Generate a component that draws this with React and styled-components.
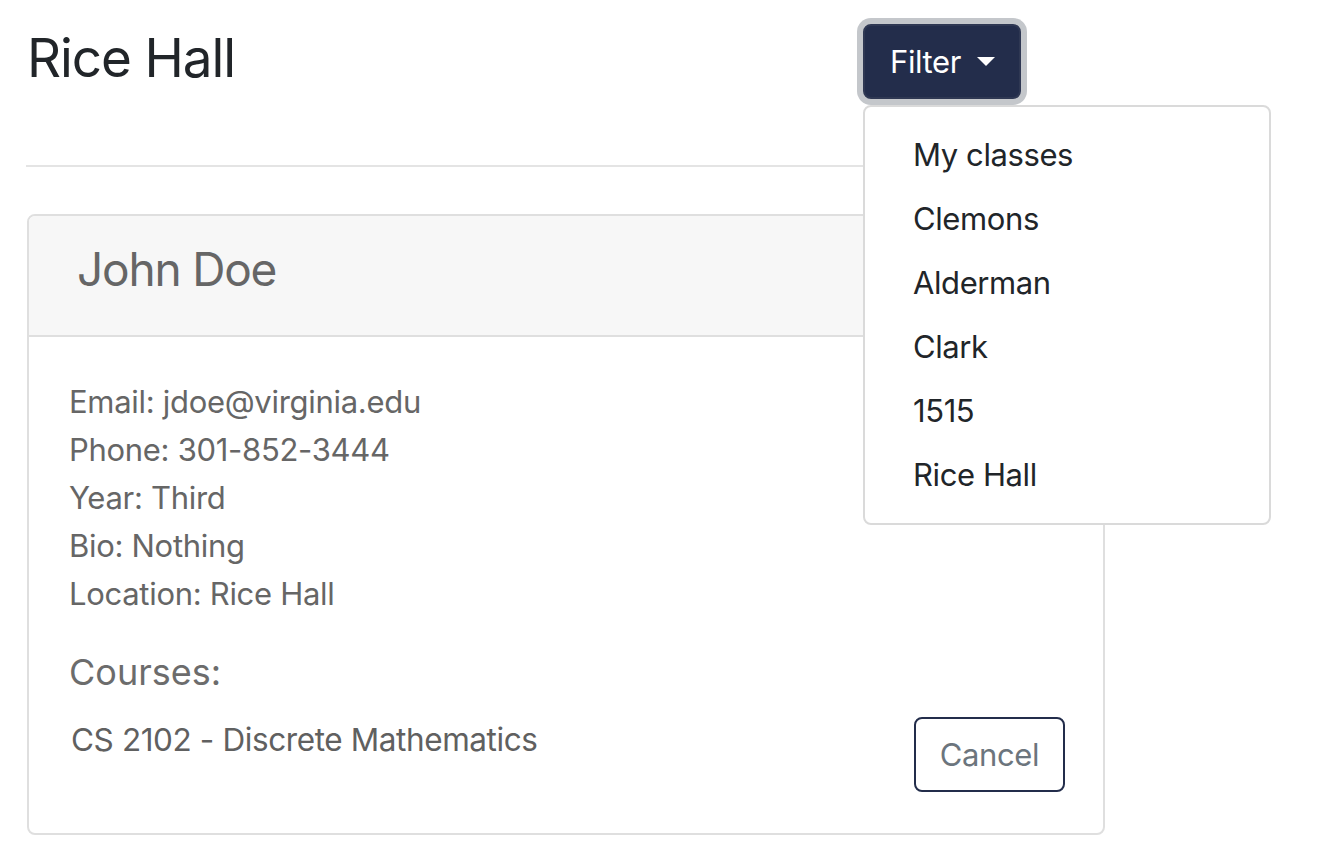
import React from "react";
import styled, { createGlobalStyle } from "styled-components";

const GlobalStyle = createGlobalStyle`
  html, body {
    margin: 0;
    padding: 0;
    background: #ffffff;
  }
  body {
    font-family: Inter, "Noto Sans", "Liberation Sans", sans-serif;
    color: #212529;
    -webkit-font-smoothing: antialiased;
  }
  * { box-sizing: border-box; }
`;

const Page = styled.div`
  width: 1334px;
  padding: 24px 0 0 27px;
`;

const TopBar = styled.div`
  display: flex;
  align-items: flex-start;
  height: 75px;
`;

const Title = styled.h3`
  flex: 0 0 836px;
  margin: 0;
  padding-top: 3px;
  font-size: 53px;
  line-height: 1.2;
  letter-spacing: -1.1px;
  font-weight: 400;
  color: #212529;
`;

const FilterWrap = styled.div`
  position: relative;
`;

const FilterButton = styled.button`
  display: inline-flex;
  align-items: center;
  height: 75px;
  padding: 0 24px 0 25px;
  border: 2px solid #2f3853;
  border-radius: 8px;
  background: #232d4b;
  color: #ffffff;
  font-family: inherit;
  font-size: 31px;
  letter-spacing: -0.4px;
  line-height: 48px;
  box-shadow: 0 0 0 6px #c4c7cb;
  cursor: pointer;
`;

const Caret = styled.span`
  display: inline-block;
  margin-left: 16px;
  width: 0;
  height: 0;
  border-top: 9px solid #ffffff;
  border-left: 9.5px solid transparent;
  border-right: 9.5px solid transparent;
`;

const Menu = styled.div`
  position: absolute;
  top: 81px;
  left: 0;
  width: 408px;
  padding: 16px 0 16px;
  background: #ffffff;
  border: 2px solid #dadada;
  border-radius: 8px;
  z-index: 10;
`;

const MenuItem = styled.div`
  padding: 8px 48px;
  font-size: 31px;
  letter-spacing: -0.4px;
  line-height: 48px;
  color: #212529;
  white-space: nowrap;
`;

const Divider = styled.hr`
  width: 1080px;
  height: 2px;
  margin: 66px 0 0 -1px;
  border: 0;
  background: #e4e4e4;
`;

const Card = styled.section`
  width: 1078px;
  margin-top: 47px;
  border: 2px solid #dfdfdf;
  border-radius: 8px;
  background: #ffffff;
`;

const CardHeader = styled.header`
  padding: 26px 48px 38px;
  background: #f7f7f7;
  border-bottom: 2px solid #dfdfdf;
  border-radius: 6px 6px 0 0;
`;

const Name = styled.h4`
  margin: 0;
  font-size: 46px;
  line-height: 1.2;
  letter-spacing: -1.2px;
  font-weight: 400;
  color: #666666;
`;

const CardBody = styled.div`
  padding: 41px 38px 41px 40px;
`;

const InfoLine = styled.div`
  font-size: 31px;
  letter-spacing: -0.3px;
  line-height: 48px;
  color: #666666;
`;

const SectionTitle = styled.h5`
  margin: 33px 0 22px;
  font-size: 36px;
  line-height: 1.2;
  letter-spacing: 0;
  font-weight: 400;
  color: #6c6c6c;
`;

const CourseRow = styled.div`
  display: flex;
  justify-content: space-between;
  align-items: flex-start;
`;

const CourseList = styled.ul`
  margin: 0;
  padding: 0 0 0 2px;
  list-style: none;
`;

const Course = styled.li`
  font-size: 31.5px;
  letter-spacing: -0.4px;
  line-height: 48px;
  color: #606060;
`;

const CancelButton = styled.button`
  margin-top: 1px;
  height: 75px;
  padding: 0 24px;
  border: 2px solid #232d4b;
  border-radius: 8px;
  background: #ffffff;
  color: #6c757d;
  font-family: inherit;
  font-size: 31px;
  letter-spacing: -0.4px;
  line-height: 48px;
  cursor: pointer;
`;

const menuItems = ["My classes", "Clemons", "Alderman", "Clark", "1515", "Rice Hall"];

const info = [
  ["Email", "jdoe@virginia.edu"],
  ["Phone", "301-852-3444"],
  ["Year", "Third"],
  ["Bio", "Nothing"],
  ["Location", "Rice Hall"],
];

export default function App() {
  return (
    <>
      <GlobalStyle />
      <Page>
        <TopBar>
          <Title>Rice Hall</Title>
          <FilterWrap>
            <FilterButton type="button">
              Filter
              <Caret />
            </FilterButton>
            <Menu>
              {menuItems.map((m) => (
                <MenuItem key={m}>{m}</MenuItem>
              ))}
            </Menu>
          </FilterWrap>
        </TopBar>
        <Divider />
        <Card>
          <CardHeader>
            <Name>John Doe</Name>
          </CardHeader>
          <CardBody>
            {info.map(([k, v]) => (
              <InfoLine key={k}>
                {k}: {v}
              </InfoLine>
            ))}
            <SectionTitle>Courses:</SectionTitle>
            <CourseRow>
              <CourseList>
                <Course>CS 2102 - Discrete Mathematics</Course>
              </CourseList>
              <CancelButton type="button">Cancel</CancelButton>
            </CourseRow>
          </CardBody>
        </Card>
      </Page>
    </>
  );
}
